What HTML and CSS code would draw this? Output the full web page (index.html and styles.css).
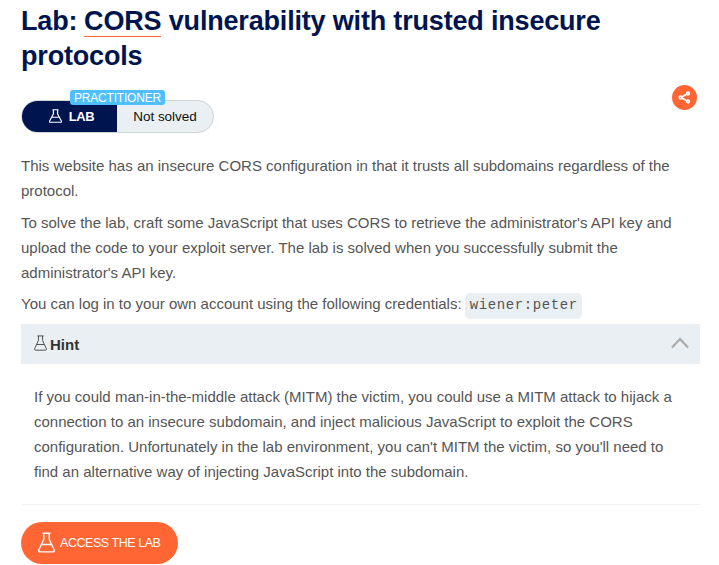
FILE: index.html
```html
<!DOCTYPE html>
<html lang="en">
<head>
<meta charset="utf-8">
<title>Lab: CORS vulnerability with trusted insecure protocols</title>
<link rel="stylesheet" href="styles.css">
</head>
<body>
<svg class="defs" aria-hidden="true">
  <symbol id="flask" viewBox="0 0 17 21" preserveAspectRatio="none">
    <path d="M4.500 1.200h8M5.800 1.300V7.300L.9 17.800q-.7 2.100 1.200 2.100h12.800q1.900 0 1.200-2.100L11.200 7.300V1.300M3.800 12.500h9.400" fill="none" stroke="currentColor"/>
  </symbol>
</svg>
<main class="page">
  <h1>Lab: <a class="term">CORS</a> vulnerability with trusted insecure<br>protocols</h1>
  <div class="meta">
    <div class="status">
      <span class="level">PRACTITIONER</span>
      <span class="kind"><svg class="flask-small"><use href="#flask"/></svg>LAB</span>
      <span class="state">Not solved</span>
    </div>
    <button class="share" aria-label="Share">
      <svg viewBox="0 0 25 25"><path d="M16 8.500 8.800 12.500l7.200 4" fill="none" stroke="#fff" stroke-width="1.600"/><g fill="#ff6633" stroke="#fff" stroke-width="1.700"><circle cx="16" cy="8.500" r="1.300"/><circle cx="8.500" cy="12.500" r="1.300"/><circle cx="16" cy="16.500" r="1.300"/></g></svg>
    </button>
  </div>
  <p>This website has an insecure CORS configuration in that it trusts all subdomains regardless of the<br>protocol.</p>
  <p>To solve the lab, craft some JavaScript that uses CORS to retrieve the administrator's API key and<br>upload the code to your exploit server. The lab is solved when you successfully submit the<br>administrator's API key.</p>
  <p class="login">You can log in to your own account using the following credentials: <code>wiener:peter</code></p>
  <section class="hint">
    <header><svg class="flask-hint"><use href="#flask"/></svg><strong>Hint</strong>
      <svg class="chevron" viewBox="0 0 18 12"><path d="M1 10.500 9 2l8 8.500" fill="none" stroke="#aaa" stroke-width="2.200"/></svg></header>
    <p>If you could man-in-the-middle attack (MITM) the victim, you could use a MITM attack to hijack a<br>connection to an insecure subdomain, and inject malicious JavaScript to exploit the CORS<br>configuration. Unfortunately in the lab environment, you can't MITM the victim, so you'll need to<br>find an alternative way of injecting JavaScript into the subdomain.</p>
  </section>
  <a class="access"><svg class="flask-large"><use href="#flask"/></svg>ACCESS THE LAB</a>
</main>
</body>
</html>
```
FILE: styles.css
```css
* { box-sizing: border-box; }
body { margin: 0; height: 565px; overflow: hidden; background: #fff; color: #555; font: 15px/25px "Liberation Sans", Arial, sans-serif; }
.defs { position: absolute; width: 0; height: 0; }
.page { width: 679px; margin-left: 21px; padding-top: 4px; white-space: nowrap; }
h1 { margin: 0; height: 81px; color: #00144f; font-size: 27px; line-height: 35px; letter-spacing: -.18px; }
.term { margin-left: -.5px; border-bottom: 1px solid #ff6633; }
.meta { display: flex; justify-content: space-between; height: 68px; padding: 0 3px 0 0; }
.status { position: relative; display: flex; width: 193px; height: 33px; margin-top: 15px; border: 1px solid #cdd4d6; border-radius: 17px; background: #e9eff2; }
.level { position: absolute; left: 48px; top: -11px; width: 95px; height: 15px; border-radius: 3px; background: #4fbfff; color: #fff; font-size: 12px; line-height: 16px; letter-spacing: -.2px; text-align: center; }
.kind, .state { display: flex; align-items: center; justify-content: center; font-size: 13px; }
.kind { width: 95px; padding-left: 4px; gap: 7px; border-radius: 16px 0 0 16px; background: #00144f; color: #fff; font-weight: bold; letter-spacing: -.4px; }
.state { flex: 1; color: #111; font-size: 13.500px; letter-spacing: -.05px; }
.flask-small { width: 13px; height: 14px; margin-top: -2px; stroke-width: 1.600; }
.share { width: 25px; height: 25px; padding: 0; border: 0; border-radius: 50%; background: #ff6633; }
.share svg { display: block; width: 25px; height: 25px; }
p { margin: 0 0 7px; }
.login { margin: -1px 0 8px; height: 25px; }
code { display: inline-block; height: 26px; padding: 0 4px 0 5px; margin-left: -1px; border-radius: 5px; background: #e9eff2; font: 14px/25px "Liberation Mono", "Courier New", monospace; letter-spacing: .6px; }
.hint { height: 181px; border-bottom: 1px solid #f0f1f1; }
.hint header { display: flex; align-items: center; height: 40px; padding: 0 11px 0 13px; background: #e9eff2; color: #333; }
.flask-hint { width: 13px; height: 16px; margin: -3px 3px 0 0; stroke-width: 1.100; }
.chevron { width: 18px; height: 12px; margin-left: auto; margin-top: -3px; }
.hint p { padding: 20px 13px; }
.access { display: flex; align-items: center; width: 157px; height: 42px; margin-top: 17px; padding-left: 17px; gap: 5px; border-radius: 21px; background: #ff6633; color: #fff; font-size: 12.500px; letter-spacing: -.45px; }
.flask-large { width: 17px; height: 21px; margin-top: -2px; stroke-width: 1.400; }
```
